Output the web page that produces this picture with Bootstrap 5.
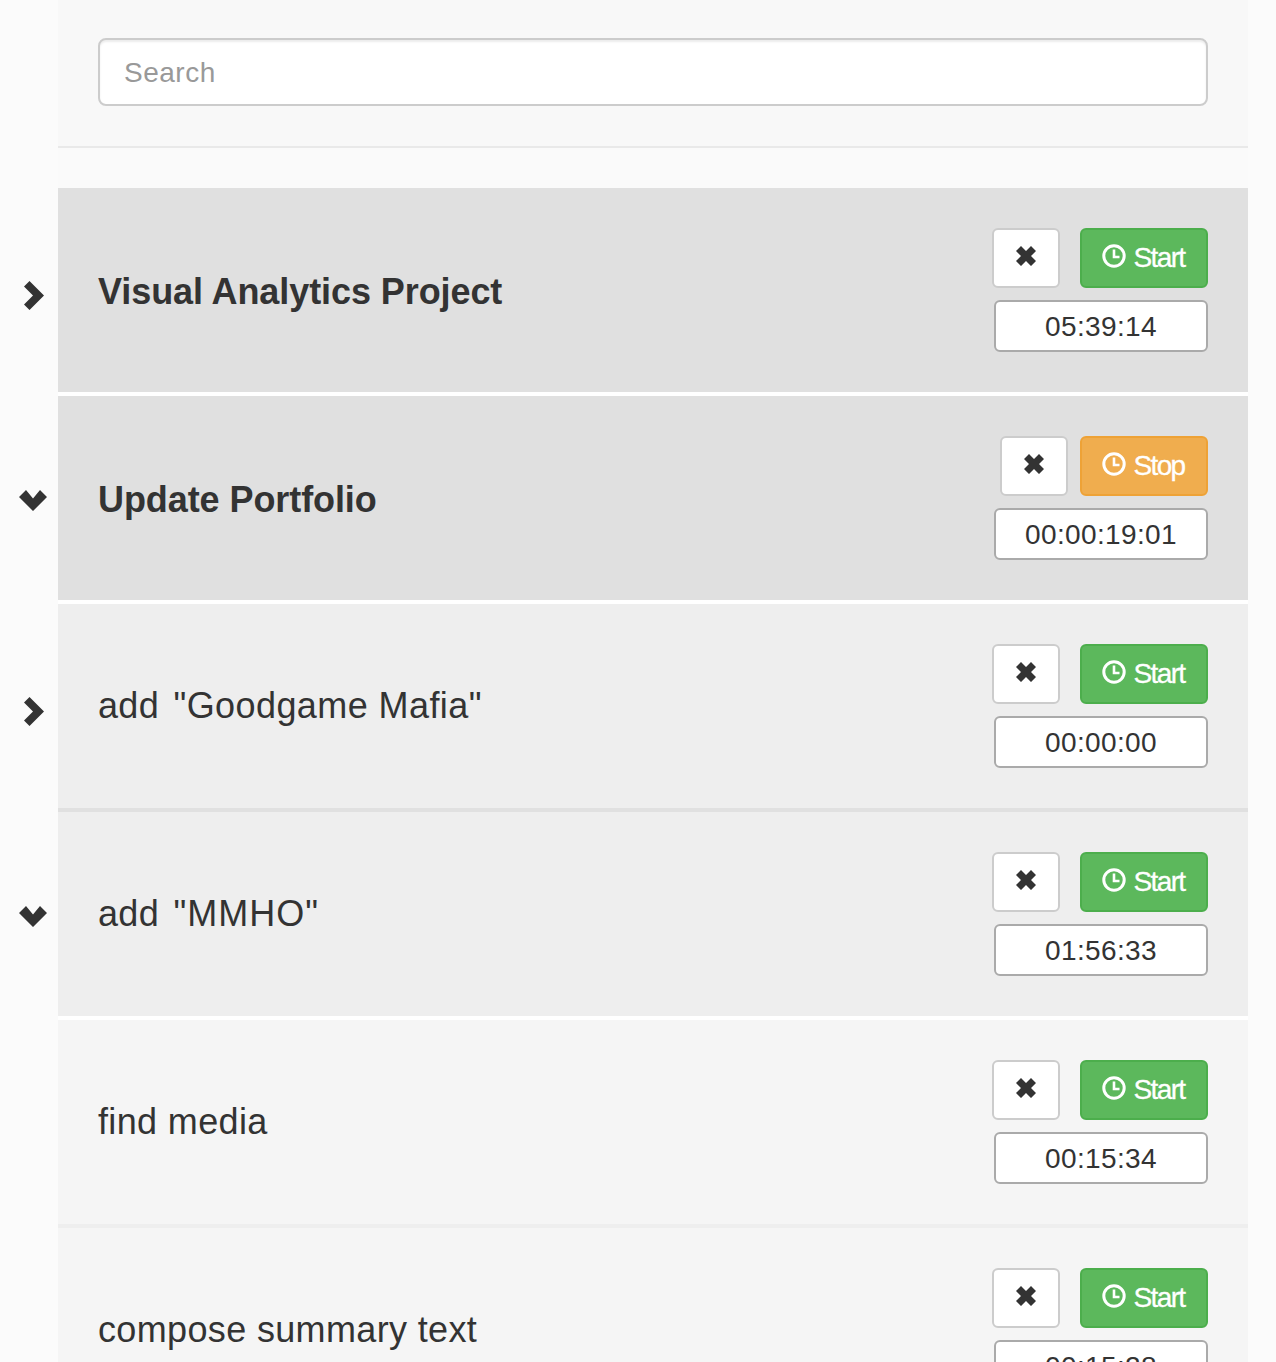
<!DOCTYPE html>
<html lang="en">
<head>
    <meta charset="UTF-8">
    <title>Tasks</title>
    <link href="https://cdn.jsdelivr.net/npm/bootstrap@5.3.1/dist/css/bootstrap.min.css" rel="stylesheet">
    <style>
        html, body { height: 1362px; overflow: hidden; }
        body {
            background-color: #fbfbfb;
            color: #333;
            font-family: "Liberation Sans", Arial, sans-serif;
        }
        .page-wrap { margin-left: 58px; width: 1190px; }
        .search-bar {
            background-color: #f8f8f8;
            border-bottom: 2px solid #e9e9e9;
            padding: 38px 40px 40px;
        }
        .search-input {
            height: 68px;
            font-size: 28px;
            letter-spacing: .5px;
            padding: 2px 24px 0;
            border: 2px solid #ccc;
            border-radius: 8px;
            box-shadow: inset 0 2px 2px rgba(0,0,0,.075);
            color: #555;
        }
        .search-input::placeholder { color: #999; }
        .task-list { background-color: #fff; border-top: 40px solid #fafafa; }
        .task-row {
            position: relative;
            height: 204px;
            margin-bottom: 4px;
            padding: 40px;
        }
        .task-project { background-color: #e0e0e0; }
        .task-sub { background-color: #eeeeee; }
        .task-leaf { background-color: #f5f5f5; }
        .ruled { box-shadow: 0 4px 0 #e0e0e0; }
        .ruled-light { box-shadow: 0 4px 0 #eeeeee; }
        .task-title { font-size: 36px; line-height: 40px; letter-spacing: .35px; margin-top: 42px; }
        .task-project .task-title { font-weight: 700; letter-spacing: -.08px; margin-top: 44px; }
        .quoted { margin-left: 4px; letter-spacing: .42px; }
        .quoted.wide-caps { letter-spacing: 1px; }
        .chevron { position: absolute; fill: #333; }
        .chev-right { left: -34px; top: 93px; width: 20px; height: 29px; }
        .chev-down { left: -39px; top: 94px; width: 28px; height: 21px; }
        .task-tools { width: 214px; flex-shrink: 0; }
        .btn-row { gap: 20px; }
        .btn-row.stop-gap { gap: 12px; }
        .btn-del {
            flex-shrink: 0;
            width: 68px; height: 60px; padding: 0 0 4px;
            background: #fff; border: 2px solid #ccc; border-radius: 6px;
        }
        .btn-run {
            flex-shrink: 0;
            width: 128px; height: 60px; padding: 0;
            gap: 7px;
            font-size: 28px; color: #fff; letter-spacing: -1.6px; border-radius: 6px;
            border-width: 2px; border-style: solid;
            -webkit-text-stroke: .3px #fff;
        }
        .btn-run svg { margin-top: -4px; margin-left: -1px; }
        .btn-start { background-color: #5cb85c; border-color: #4cae4c; }
        .btn-stop { background-color: #f0ad4e; border-color: #eea236; }
        .time-box {
            height: 52px; width: 214px; margin-top: 12px;
            background: #fff; border: 2px solid #aaa; border-radius: 6px;
            font-size: 28px; line-height: 50px; text-align: center; letter-spacing: .35px;
        }
    </style>
</head>
<body>
    <div class="page-wrap">
        <div class="search-bar">
            <input type="text" class="form-control search-input" placeholder="Search">
        </div>

        <div class="task-list">
            <div class="task-row task-project d-flex justify-content-between">
                <svg class="chevron chev-right" viewBox="0 0 20 29"><path d="M5.500 0 L20 14.500 L5.500 29 L0 23.500 L9 14.500 L0 5.500 Z"/></svg>
                <div class="task-title">Visual Analytics Project</div>
                <div class="task-tools">
                    <div class="btn-row d-flex justify-content-end">
                        <button class="btn btn-del d-flex align-items-center justify-content-center"><svg width="20" height="20" viewBox="0 0 20 20"><path fill="#333" d="M5 0 L10 5 L15 0 L20 5 L15 10 L20 15 L15 20 L10 15 L5 20 L0 15 L5 10 L0 5 Z"/></svg></button>
                        <button class="btn btn-run btn-start d-flex align-items-center justify-content-center"><svg width="24" height="24" viewBox="0 0 24 24"><circle cx="12" cy="12" r="10.2" fill="none" stroke="#fff" stroke-width="3"/><path fill="none" stroke="#fff" stroke-width="2.6" d="M12 5.500 V13 H17.500"/></svg>Start</button>
                    </div>
                    <div class="time-box">05:39:14</div>
                </div>
            </div>

            <div class="task-row task-project d-flex justify-content-between">
                <svg class="chevron chev-down" viewBox="0 0 28 21"><path d="M0 7 L7 0 L14 8.500 L21 0 L28 7 L14 21 Z"/></svg>
                <div class="task-title">Update Portfolio</div>
                <div class="task-tools">
                    <div class="btn-row stop-gap d-flex justify-content-end">
                        <button class="btn btn-del d-flex align-items-center justify-content-center"><svg width="20" height="20" viewBox="0 0 20 20"><path fill="#333" d="M5 0 L10 5 L15 0 L20 5 L15 10 L20 15 L15 20 L10 15 L5 20 L0 15 L5 10 L0 5 Z"/></svg></button>
                        <button class="btn btn-run btn-stop d-flex align-items-center justify-content-center"><svg width="24" height="24" viewBox="0 0 24 24"><circle cx="12" cy="12" r="10.2" fill="none" stroke="#fff" stroke-width="3"/><path fill="none" stroke="#fff" stroke-width="2.6" d="M12 5.500 V13 H17.500"/></svg>Stop</button>
                    </div>
                    <div class="time-box">00:00:19:01</div>
                </div>
            </div>

            <div class="task-row task-sub ruled d-flex justify-content-between">
                <svg class="chevron chev-right" viewBox="0 0 20 29"><path d="M5.500 0 L20 14.500 L5.500 29 L0 23.500 L9 14.500 L0 5.500 Z"/></svg>
                <div class="task-title">add <span class="quoted">"Goodgame Mafia"</span></div>
                <div class="task-tools">
                    <div class="btn-row d-flex justify-content-end">
                        <button class="btn btn-del d-flex align-items-center justify-content-center"><svg width="20" height="20" viewBox="0 0 20 20"><path fill="#333" d="M5 0 L10 5 L15 0 L20 5 L15 10 L20 15 L15 20 L10 15 L5 20 L0 15 L5 10 L0 5 Z"/></svg></button>
                        <button class="btn btn-run btn-start d-flex align-items-center justify-content-center"><svg width="24" height="24" viewBox="0 0 24 24"><circle cx="12" cy="12" r="10.2" fill="none" stroke="#fff" stroke-width="3"/><path fill="none" stroke="#fff" stroke-width="2.6" d="M12 5.500 V13 H17.500"/></svg>Start</button>
                    </div>
                    <div class="time-box">00:00:00</div>
                </div>
            </div>

            <div class="task-row task-sub d-flex justify-content-between">
                <svg class="chevron chev-down" viewBox="0 0 28 21"><path d="M0 7 L7 0 L14 8.500 L21 0 L28 7 L14 21 Z"/></svg>
                <div class="task-title">add <span class="quoted wide-caps">"MMHO"</span></div>
                <div class="task-tools">
                    <div class="btn-row d-flex justify-content-end">
                        <button class="btn btn-del d-flex align-items-center justify-content-center"><svg width="20" height="20" viewBox="0 0 20 20"><path fill="#333" d="M5 0 L10 5 L15 0 L20 5 L15 10 L20 15 L15 20 L10 15 L5 20 L0 15 L5 10 L0 5 Z"/></svg></button>
                        <button class="btn btn-run btn-start d-flex align-items-center justify-content-center"><svg width="24" height="24" viewBox="0 0 24 24"><circle cx="12" cy="12" r="10.2" fill="none" stroke="#fff" stroke-width="3"/><path fill="none" stroke="#fff" stroke-width="2.6" d="M12 5.500 V13 H17.500"/></svg>Start</button>
                    </div>
                    <div class="time-box">01:56:33</div>
                </div>
            </div>

            <div class="task-row task-leaf ruled-light d-flex justify-content-between">
                <div class="task-title">find media</div>
                <div class="task-tools">
                    <div class="btn-row d-flex justify-content-end">
                        <button class="btn btn-del d-flex align-items-center justify-content-center"><svg width="20" height="20" viewBox="0 0 20 20"><path fill="#333" d="M5 0 L10 5 L15 0 L20 5 L15 10 L20 15 L15 20 L10 15 L5 20 L0 15 L5 10 L0 5 Z"/></svg></button>
                        <button class="btn btn-run btn-start d-flex align-items-center justify-content-center"><svg width="24" height="24" viewBox="0 0 24 24"><circle cx="12" cy="12" r="10.2" fill="none" stroke="#fff" stroke-width="3"/><path fill="none" stroke="#fff" stroke-width="2.6" d="M12 5.500 V13 H17.500"/></svg>Start</button>
                    </div>
                    <div class="time-box">00:15:34</div>
                </div>
            </div>

            <div class="task-row task-leaf d-flex justify-content-between">
                <div class="task-title">compose summary text</div>
                <div class="task-tools">
                    <div class="btn-row d-flex justify-content-end">
                        <button class="btn btn-del d-flex align-items-center justify-content-center"><svg width="20" height="20" viewBox="0 0 20 20"><path fill="#333" d="M5 0 L10 5 L15 0 L20 5 L15 10 L20 15 L15 20 L10 15 L5 20 L0 15 L5 10 L0 5 Z"/></svg></button>
                        <button class="btn btn-run btn-start d-flex align-items-center justify-content-center"><svg width="24" height="24" viewBox="0 0 24 24"><circle cx="12" cy="12" r="10.2" fill="none" stroke="#fff" stroke-width="3"/><path fill="none" stroke="#fff" stroke-width="2.6" d="M12 5.500 V13 H17.500"/></svg>Start</button>
                    </div>
                    <div class="time-box">00:15:28</div>
                </div>
            </div>
        </div>
    </div>

    <script src="https://cdn.jsdelivr.net/npm/bootstrap@5.3.1/dist/js/bootstrap.bundle.min.js"></script>
</body>
</html>
